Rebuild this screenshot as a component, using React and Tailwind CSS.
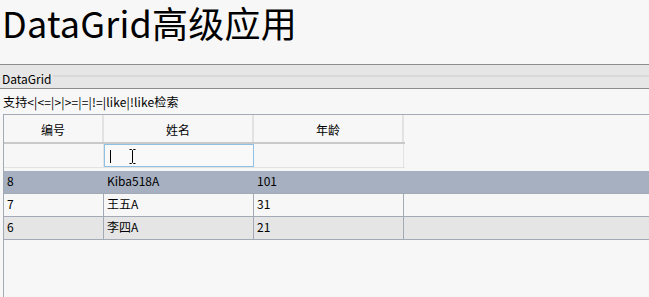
const rows = [
  { id: '8', name: 'Kiba518A', age: '101', selected: true },
  { id: '7', name: '王五A', age: '31' },
  { id: '6', name: '李四A', age: '21', alt: true },
];

const font = { fontFamily: '"Noto Sans CJK SC", "Noto Sans", sans-serif' };

export default function App() {
  return (
    <div className="w-[649px] h-[297px] overflow-hidden bg-[#f7f7f7] text-black" style={font}>
      <div className="h-[64px] pl-[2px] flex flex-col">
        <h1 className="-mt-[4px] text-[36px] leading-[52px] tracking-[0.2px] whitespace-nowrap">DataGrid高级应用</h1>
      </div>

      {/* panel header */}
      <div className="h-[25px] border-t border-b border-[#8c8c8c] bg-[#e6e6e6] flex flex-col">
        <div className="h-[2px] bg-[#f3f3f3]" />
        <div className="relative flex-1">
          <div className="absolute left-0 right-0 top-[10px] h-[2px] bg-[#d9d9d9]" />
          <span className="relative pl-[2px] text-[12px] leading-[20px] bg-[#e6e6e6] pr-[1px]">DataGrid</span>
        </div>
      </div>

      {/* toolbar */}
      <div className="h-[25px] pl-[3px] pt-[4px] text-[12px] leading-[18px] tracking-[0.15px]">支持&lt;|&lt;=|&gt;|&gt;=|=|!=|like|!like检索</div>

      {/* grid */}
      <div className="ml-[3px] h-[183px] border-t border-l border-[#a3aab6] bg-[#f7f7f7]">
        <div className="flex h-[27px] text-[12px] leading-[18px]">
          <div className="w-[100px] flex justify-center pt-[6px] border-r-[2px] border-[#e2e2e2]">编号</div>
          <div className="w-[150px] flex justify-center pt-[6px] border-r-[2px] border-[#e2e2e2]">姓名</div>
          <div className="w-[150px] flex justify-center pt-[6px] border-r-[2px] border-[#e2e2e2]">年龄</div>
        </div>
        <div className="flex w-[401px] h-[26px] border-t-[2px] border-[#c9c9c9] border-b border-b-[#e2e2e2]">
          <div className="w-[100px] border-r border-[#e2e2e2]" />
          <div className="relative w-[150px] border border-[#8fc0e6] bg-[#f9f9f9]">
            <div className="absolute left-[5px] top-[5px] w-px h-[13px] bg-black" />
            <svg className="absolute left-[24px] top-[4px]" width="7" height="15" viewBox="0 0 7 15">
              <path d="M0.5 0.5h2l1 1 1-1h2M3.5 1.5v12M0.5 14.5h2l1-1 1 1h2" stroke="#000" fill="none" />
            </svg>
          </div>
          <div className="w-[150px] border-r border-[#e2e2e2]" />
        </div>
        <div className="h-[3px]" />
        {rows.map((r) => (
          <div
            key={r.id}
            className={
              'flex h-[23px] border-b border-[#a3aab6] text-[12px] leading-[20px] ' +
              (r.selected ? 'bg-[#a7b0c1]' : r.alt ? 'bg-[#e5e5e5]' : 'bg-[#f7f7f7]')
            }
          >
            <div className={'w-[100px] pl-[3px] ' + (r.selected ? '' : 'border-r border-[#a3aab6]')}>{r.id}</div>
            <div className={'w-[150px] pl-[3px] ' + (r.selected ? '' : 'border-r border-[#a3aab6]')}>{r.name}</div>
            <div className={'w-[150px] pl-[3px] ' + (r.selected ? '' : 'border-r border-[#a3aab6]')}>{r.age}</div>
            <div className="flex-1" />
          </div>
        ))}
      </div>
    </div>
  );
}
